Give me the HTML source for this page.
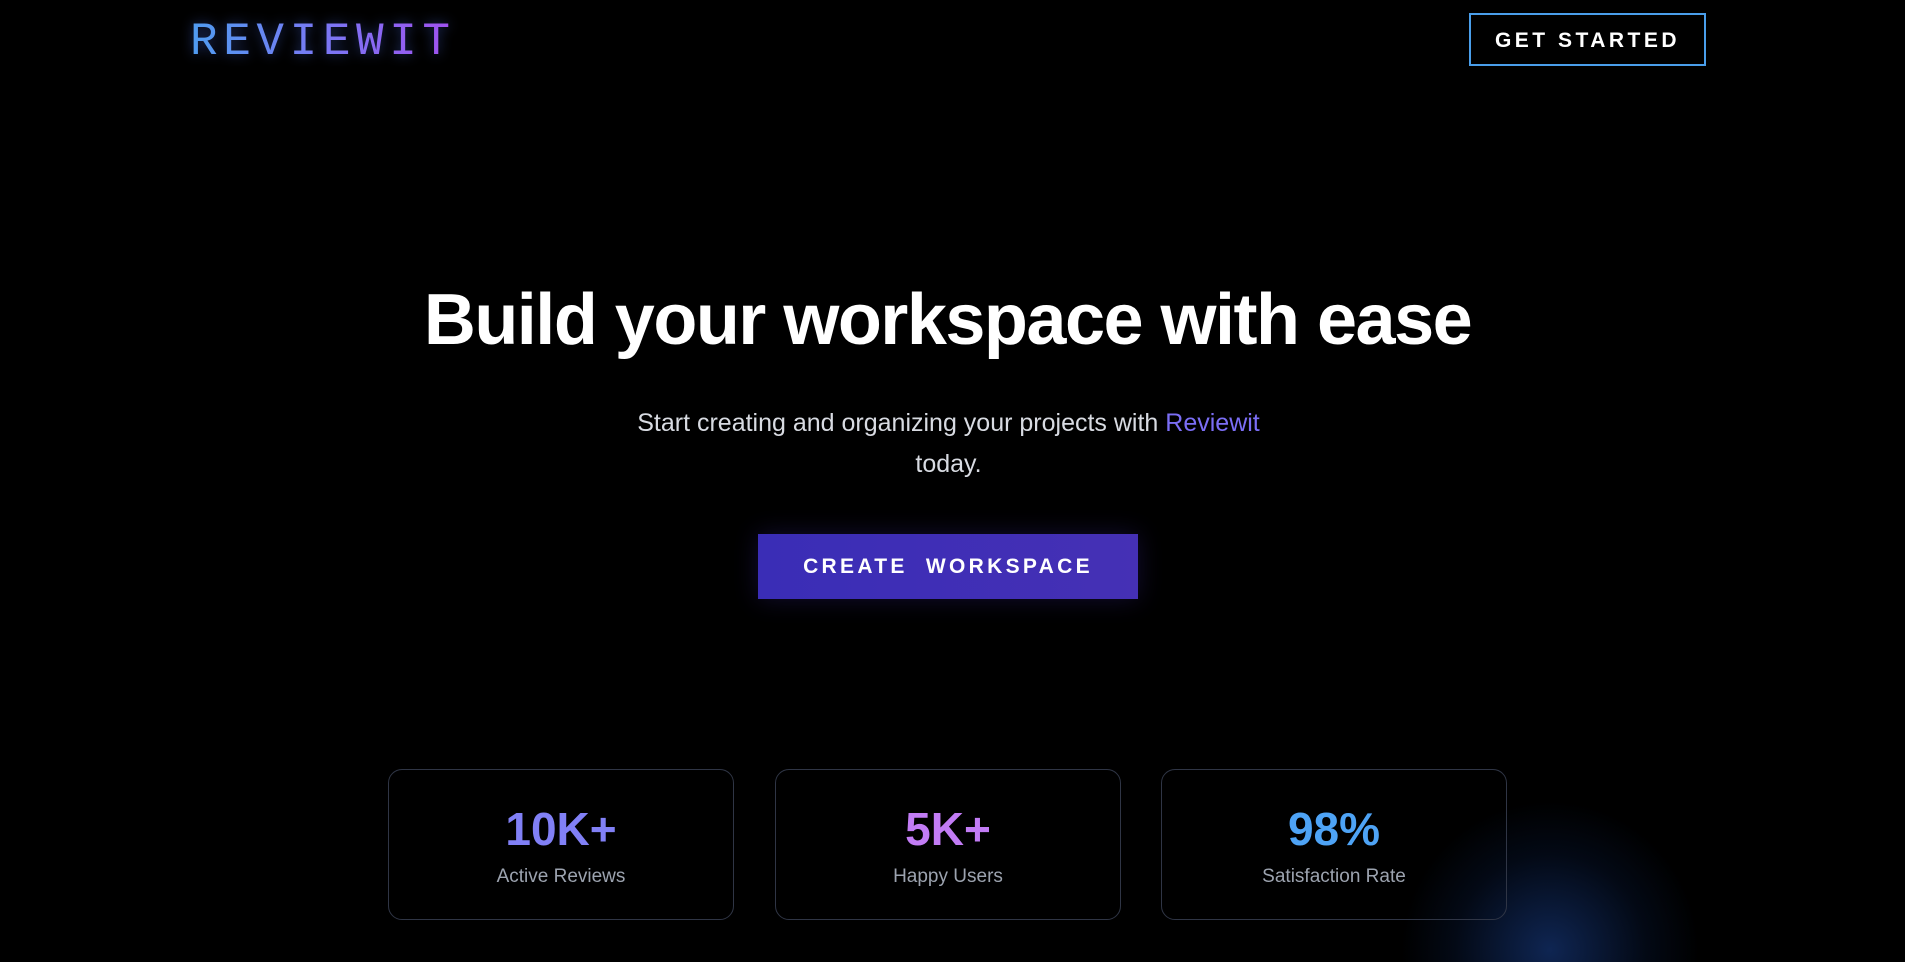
<!DOCTYPE html>
<html><head><meta charset="utf-8"><style>
html,body{margin:0;padding:0;background:#000;width:1905px;height:962px;overflow:hidden;font-family:"Liberation Sans",sans-serif}
.wrap{position:relative;width:1905px;height:962px;overflow:hidden}
.logo{position:absolute;left:190px;top:16px;font-family:"Liberation Mono",monospace;font-size:46px;letter-spacing:5.6px;line-height:52px;background:linear-gradient(90deg,#4f9cf0,#7a78f5 50%,#a150ef);-webkit-background-clip:text;color:transparent;filter:drop-shadow(0 0 6px rgba(80,120,255,.45))}
.gs{position:absolute;left:1469px;top:13px;width:237px;height:53px;border:2px solid #4a9eea;box-sizing:border-box;color:#fff;font-weight:bold;font-size:21px;letter-spacing:3.5px;display:flex;align-items:center;justify-content:center;padding-top:3px}
h1{position:absolute;left:0;right:0;top:272px;margin:0;text-align:center;color:#fff;font-size:72px;font-weight:bold;letter-spacing:-1.5px;line-height:96px;padding-right:10px}
.sub{position:absolute;left:0;right:0;top:403px;text-align:center;color:#d8dbe2;font-size:25px;line-height:41px;padding-right:8px}
.sub span{color:#7b6ef5}
.btn{position:absolute;left:758px;top:534px;width:380px;height:65px;background:linear-gradient(90deg,#3a2db6,#4530b5);color:#fff;font-weight:bold;font-size:21px;letter-spacing:3.3px;display:flex;align-items:center;justify-content:center;box-shadow:0 0 25px rgba(70,50,190,.25)}
.glow{position:absolute;left:1400px;top:800px;width:300px;height:300px;border-radius:50%;background:radial-gradient(circle,rgba(20,50,110,.75),rgba(10,30,70,.3) 45%,rgba(0,0,0,0) 70%)}
.card{position:absolute;top:769px;width:346px;height:151px;border:1px solid #2f3545;border-radius:14px;box-sizing:border-box;text-align:center}
.card .n{margin-top:32px;font-size:46px;font-weight:bold;line-height:54px}
.card .l{margin-top:10px;font-size:19px;color:#9ca3af}
</style></head><body><div class="wrap">
<div class="glow"></div>
<div class="logo">REVIEWIT</div>
<div class="gs">GET STARTED</div>
<h1>Build your workspace with ease</h1>
<div class="sub">Start creating and organizing your projects with <span>Reviewit</span><br>today.</div>
<div class="btn">CREATE&nbsp; WORKSPACE</div>
<div class="card" style="left:388px"><div class="n" style="color:#8180f6">10K+</div><div class="l">Active Reviews</div></div>
<div class="card" style="left:775px"><div class="n" style="color:#c27cf5">5K+</div><div class="l">Happy Users</div></div>
<div class="card" style="left:1161px"><div class="n" style="color:#4ea3f5">98%</div><div class="l">Satisfaction Rate</div></div>
</div></body></html>
